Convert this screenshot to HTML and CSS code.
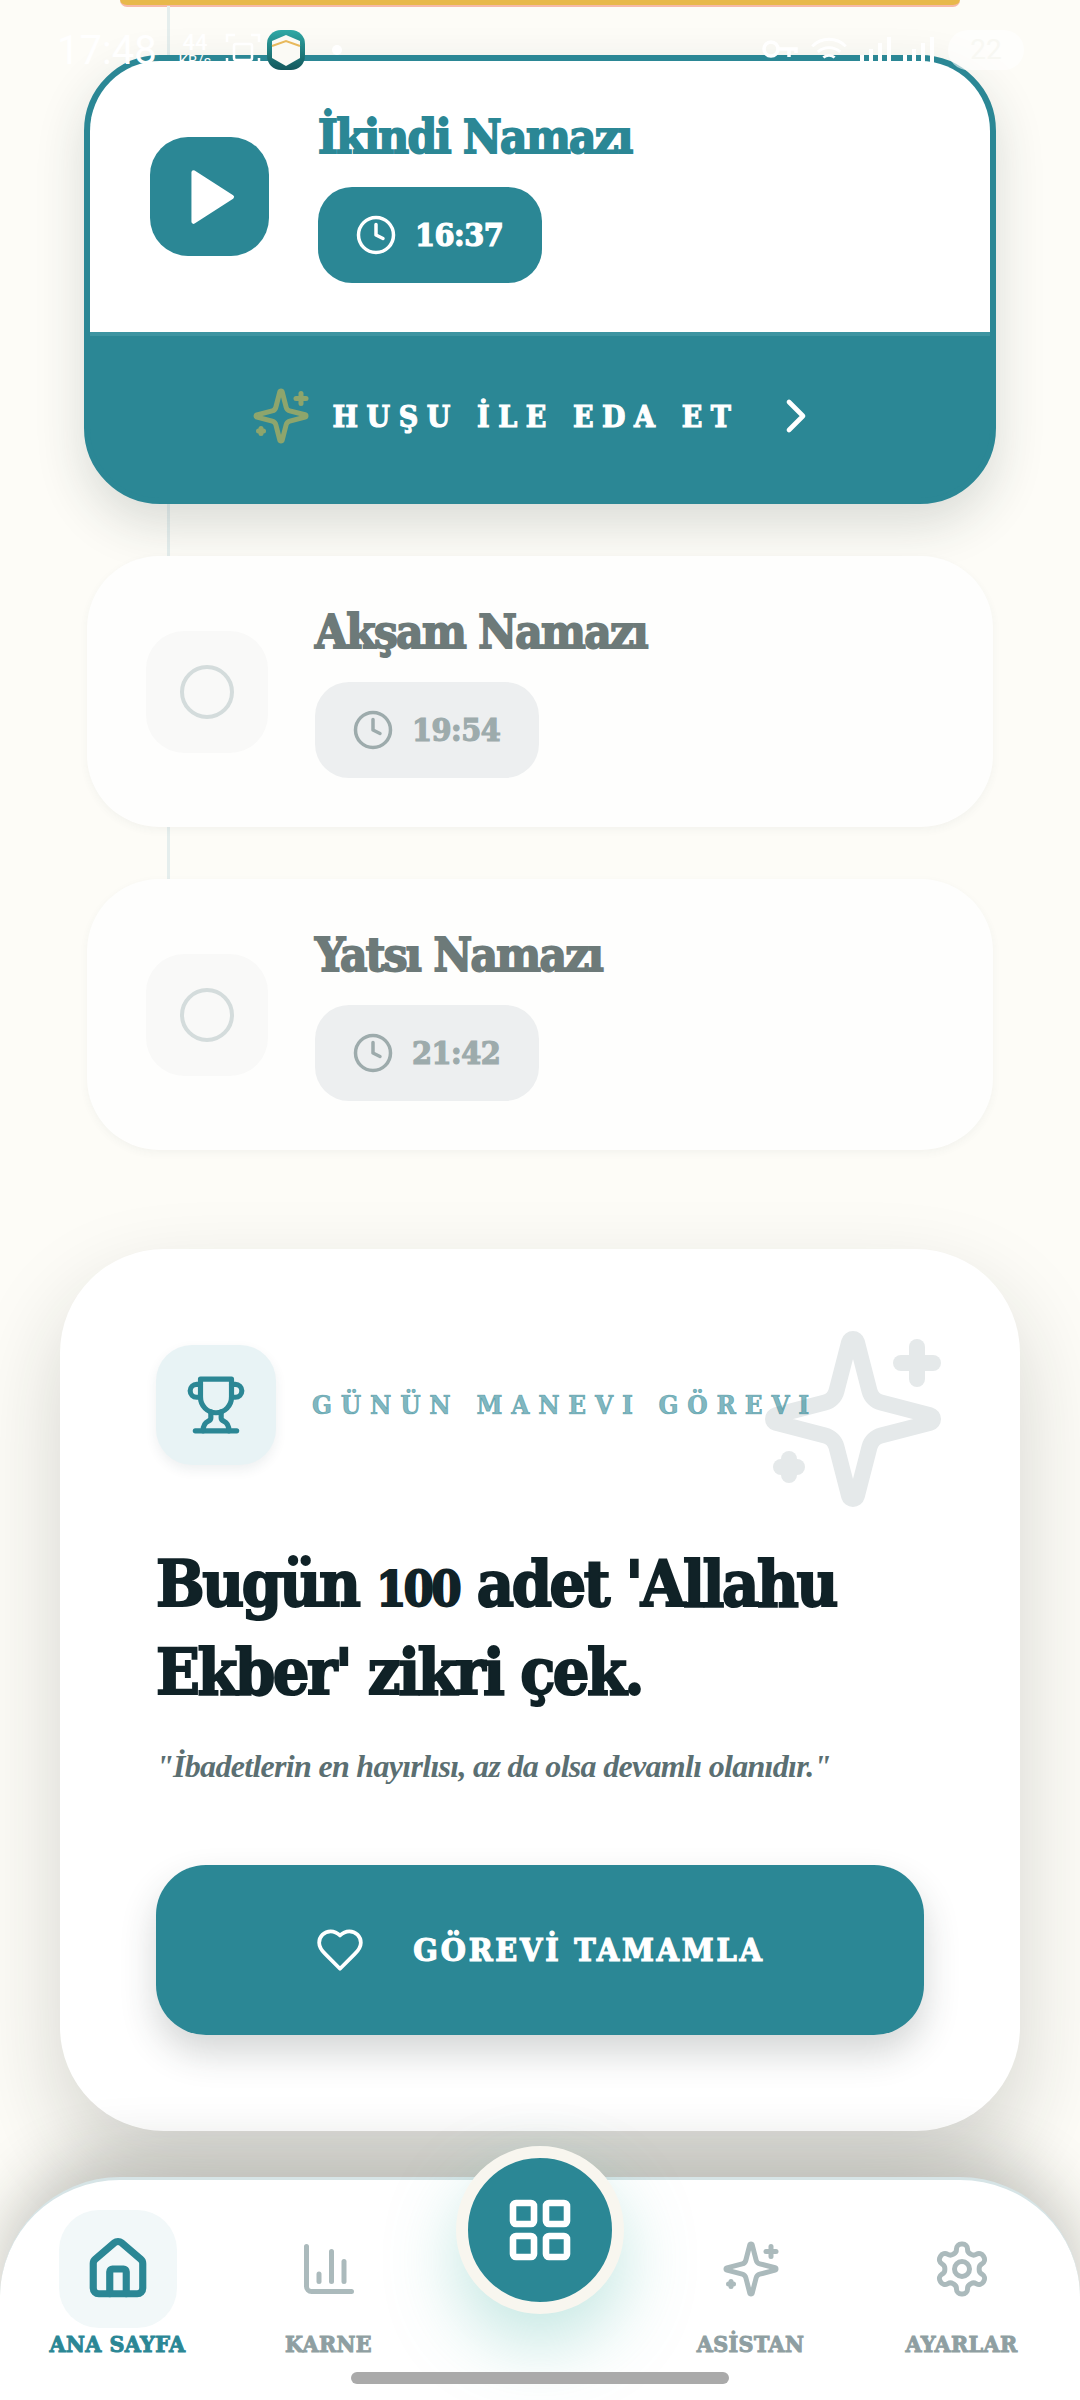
FILE: index.html
```html
<!DOCTYPE html>
<html lang="tr">
<head>
    <meta charset="UTF-8">
    <meta name="viewport" content="width=device-width, initial-scale=1.0">
    <title>Ana Sayfa</title>
    <link rel="stylesheet" href="styles.css">
</head>
<body>
    <div class="page">
        <div class="top-strip"></div>
        <div class="timeline-line"></div>

        <!-- Prayer list -->
        <section class="prayers">
            <article class="prayer-active">
                <div class="prayer-body">
                    <div class="play-box">
                        <svg class="play-icon" viewBox="0 0 24 24"><polygon points="6 3 20 12 6 21"/></svg>
                    </div>
                    <div class="prayer-info">
                        <h2 class="prayer-name">İkindi Namazı</h2>
                        <div class="time-pill">
                            <svg class="icon clock-icon" viewBox="0 0 24 24"><circle cx="12" cy="12" r="10"/><polyline points="12 6 12 12 16 14"/></svg>
                            <span>16:37</span>
                        </div>
                    </div>
                </div>
                <div class="prayer-action">
                    <svg class="icon action-spark" viewBox="0 0 24 24"><path d="M9.937 15.5A2 2 0 0 0 8.5 14.063l-6.135-1.582a.5.5 0 0 1 0-.962L8.5 9.936A2 2 0 0 0 9.937 8.5l1.582-6.135a.5.5 0 0 1 .963 0L14.063 8.5A2 2 0 0 0 15.5 9.937l6.135 1.581a.5.5 0 0 1 0 .964L15.5 14.063a2 2 0 0 0-1.437 1.437l-1.582 6.135a.5.5 0 0 1-.963 0z"/><path d="M20 3v4"/><path d="M22 5h-4"/><path d="M4 17v2"/><path d="M5 18H3"/></svg>
                    <span class="action-label">HUŞU İLE EDA ET</span>
                    <svg class="icon action-chevron" viewBox="0 0 24 24"><path d="m9 18 6-6-6-6"/></svg>
                </div>
            </article>

            <article class="prayer-card">
                <div class="check-box"><span class="check-ring"></span></div>
                <div class="prayer-info">
                    <h2 class="prayer-name">Akşam Namazı</h2>
                    <div class="time-pill">
                        <svg class="icon clock-icon" viewBox="0 0 24 24"><circle cx="12" cy="12" r="10"/><polyline points="12 6 12 12 16 14"/></svg>
                        <span>19:54</span>
                    </div>
                </div>
            </article>

            <article class="prayer-card">
                <div class="check-box"><span class="check-ring"></span></div>
                <div class="prayer-info">
                    <h2 class="prayer-name">Yatsı Namazı</h2>
                    <div class="time-pill">
                        <svg class="icon clock-icon" viewBox="0 0 24 24"><circle cx="12" cy="12" r="10"/><polyline points="12 6 12 12 16 14"/></svg>
                        <span>21:42</span>
                    </div>
                </div>
            </article>
        </section>

        <!-- Daily task -->
        <section class="mission">
            <svg class="icon ghost-spark" viewBox="0 0 24 24"><path d="M9.937 15.5A2 2 0 0 0 8.5 14.063l-6.135-1.582a.5.5 0 0 1 0-.962L8.5 9.936A2 2 0 0 0 9.937 8.5l1.582-6.135a.5.5 0 0 1 .963 0L14.063 8.5A2 2 0 0 0 15.5 9.937l6.135 1.581a.5.5 0 0 1 0 .964L15.5 14.063a2 2 0 0 0-1.437 1.437l-1.582 6.135a.5.5 0 0 1-.963 0z"/><path d="M20 3v4"/><path d="M22 5h-4"/><path d="M4 17v2"/><path d="M5 18H3"/></svg>
            <div class="mission-head">
                <div class="trophy-box">
                    <svg class="icon trophy-icon" viewBox="0 0 24 24"><path d="M6 9H4.5a2.5 2.5 0 0 1 0-5H6"/><path d="M18 9h1.5a2.5 2.5 0 0 0 0-5H18"/><path d="M4 22h16"/><path d="M10 14.66V17c0 .55-.47.98-.97 1.21C7.85 18.75 7 20.24 7 22"/><path d="M14 14.66V17c0 .55.47.98.97 1.21C16.15 18.75 17 20.24 17 22"/><path d="M18 2H6v7a6 6 0 0 0 12 0V2Z"/></svg>
                </div>
                <span class="mission-label">GÜNÜN MANEVI GÖREVI</span>
            </div>
            <h1 class="mission-title">
                <span class="title-line">Bugün <span class="old-num">100</span> adet 'Allahu</span>
                <span class="title-line">Ekber' zikri çek.</span>
            </h1>
            <p class="mission-quote">"İbadetlerin en hayırlısı, az da olsa devamlı olanıdır."</p>
            <button class="mission-btn">
                <svg class="icon heart-icon" viewBox="0 0 24 24"><path d="M19 14c1.49-1.46 3-3.21 3-5.5A5.5 5.5 0 0 0 16.5 3c-1.76 0-3 .5-4.5 2-1.5-1.5-2.74-2-4.5-2A5.5 5.5 0 0 0 2 8.5c0 2.3 1.5 4.05 3 5.5l7 7Z"/></svg>
                <span>GÖREVİ TAMAMLA</span>
            </button>
        </section>

        <!-- Bottom navigation -->
        <nav class="bottom-nav">
            <a class="nav-item nav-item-active">
                <span class="nav-icon-box">
                    <svg class="icon nav-icon" viewBox="0 0 24 24"><path d="M15 21v-8a1 1 0 0 0-1-1h-4a1 1 0 0 0-1 1v8"/><path d="M3 10a2 2 0 0 1 .709-1.528l7-5.999a2 2 0 0 1 2.582 0l7 5.999A2 2 0 0 1 21 10v9a2 2 0 0 1-2 2H5a2 2 0 0 1-2-2z"/></svg>
                </span>
                <span class="nav-label">ANA SAYFA</span>
            </a>
            <a class="nav-item">
                <span class="nav-icon-box">
                    <svg class="icon nav-icon" viewBox="0 0 24 24"><path d="M3 3v16a2 2 0 0 0 2 2h16"/><path d="M18 17V9"/><path d="M13 17V5"/><path d="M8 17v-3"/></svg>
                </span>
                <span class="nav-label">KARNE</span>
            </a>
            <span class="nav-gap"></span>
            <a class="nav-item">
                <span class="nav-icon-box">
                    <svg class="icon nav-icon" viewBox="0 0 24 24"><path d="M9.937 15.5A2 2 0 0 0 8.5 14.063l-6.135-1.582a.5.5 0 0 1 0-.962L8.5 9.936A2 2 0 0 0 9.937 8.5l1.582-6.135a.5.5 0 0 1 .963 0L14.063 8.5A2 2 0 0 0 15.5 9.937l6.135 1.581a.5.5 0 0 1 0 .964L15.5 14.063a2 2 0 0 0-1.437 1.437l-1.582 6.135a.5.5 0 0 1-.963 0z"/><path d="M20 3v4"/><path d="M22 5h-4"/><path d="M4 17v2"/><path d="M5 18H3"/></svg>
                </span>
                <span class="nav-label">ASİSTAN</span>
            </a>
            <a class="nav-item">
                <span class="nav-icon-box">
                    <svg class="icon nav-icon" viewBox="0 0 24 24"><path d="M12.22 2h-.44a2 2 0 0 0-2 2v.18a2 2 0 0 1-1 1.73l-.43.25a2 2 0 0 1-2 0l-.15-.08a2 2 0 0 0-2.73.73l-.22.38a2 2 0 0 0 .73 2.73l.15.1a2 2 0 0 1 1 1.72v.51a2 2 0 0 1-1 1.74l-.15.09a2 2 0 0 0-.73 2.73l.22.38a2 2 0 0 0 2.73.73l.15-.08a2 2 0 0 1 2 0l.43.25a2 2 0 0 1 1 1.73V20a2 2 0 0 0 2 2h.44a2 2 0 0 0 2-2v-.18a2 2 0 0 1 1-1.73l.43-.25a2 2 0 0 1 2 0l.15.08a2 2 0 0 0 2.73-.73l.22-.39a2 2 0 0 0-.73-2.73l-.15-.08a2 2 0 0 1-1-1.74v-.5a2 2 0 0 1 1-1.74l.15-.09a2 2 0 0 0 .73-2.73l-.22-.38a2 2 0 0 0-2.73-.73l-.15.08a2 2 0 0 1-2 0l-.43-.25a2 2 0 0 1-1-1.73V4a2 2 0 0 0-2-2z"/><circle cx="12" cy="12" r="3"/></svg>
                </span>
                <span class="nav-label">AYARLAR</span>
            </a>
            <button class="nav-fab">
                <svg class="icon fab-icon" viewBox="0 0 24 24"><rect width="7" height="7" x="3" y="3" rx="1"/><rect width="7" height="7" x="14" y="3" rx="1"/><rect width="7" height="7" x="14" y="14" rx="1"/><rect width="7" height="7" x="3" y="14" rx="1"/></svg>
            </button>
            <div class="home-bar"></div>
        </nav>

        <!-- System status bar, drawn on top of the page -->
        <div class="status-bar">
            <div class="status-left">
                <span class="status-time">17:48</span>
                <span class="status-speed"><b>44</b><small>KB/s</small></span>
                <svg class="status-shot" viewBox="0 0 36 36"><path d="M2 10V3h8M26 3h8v7M2 26v7h8M26 33h8v-7"/><rect x="9" y="12" width="18" height="16" rx="2"/></svg>
                <svg class="status-app" viewBox="0 0 38 40">
                    <defs><linearGradient id="appFill" x1="0" y1="0" x2="0" y2="1"><stop offset="0" stop-color="#2fa9a6"/><stop offset="1" stop-color="#14575c"/></linearGradient></defs>
                    <rect width="38" height="40" rx="14" fill="url(#appFill)"/>
                    <polygon points="19,5 33,11 33,28 19,36 5,28 5,11" fill="#fbfaf5"/>
                    <path d="M5 16 19 11l14 5" fill="none" stroke="#e8b95c" stroke-width="2"/>
                </svg>
                <span class="status-dot"></span>
            </div>
            <div class="status-right">
                <svg class="status-key" viewBox="0 0 36 22"><circle cx="9" cy="10" r="7"/><path d="M16 10h18v4M27 10v8"/></svg>
                <svg class="status-wifi" viewBox="0 0 40 30"><path d="M2 11c10-10 26-10 36 0M8 17c7-6 17-6 24 0M14 23c3-3 9-3 12 0"/></svg>
                <div class="status-bars"><i></i><i></i><i></i><i></i></div>
                <div class="status-bars"><i></i><i></i><i></i><i></i></div>
                <span class="status-battery">22</span>
            </div>
        </div>
    </div>
</body>
</html>
```

FILE: styles.css
```css
* {
    box-sizing: border-box;
}
body {
    margin: 0;
    font-family: "DejaVu Serif Condensed", "DejaVu Serif", serif;
}
h1, h2, p {
    margin: 0;
}
.page {
    position: relative;
    width: 1080px;
    height: 2400px;
    overflow: hidden;
    background: #fdfcf7;
}
.icon {
    fill: none;
    stroke: currentColor;
    stroke-width: 2;
    stroke-linecap: round;
    stroke-linejoin: round;
}

/* Top leftovers */
.top-strip {
    height: 7px;
    margin: 0 120px;
    background: #e8b84b;
    border-bottom: 2px solid #f6b9a9;
    border-radius: 0 0 40px 40px;
}
.timeline-line {
    position: absolute;
    left: 167px;
    top: 6px;
    width: 3px;
    height: 880px;
    background: #e5eeed;
}

/* Prayer list */
.prayers {
    position: relative;
    display: flex;
    flex-direction: column;
    gap: 52px;
    padding: 48px 84px 0;
}
.prayer-active {
    height: 449px;
    border: 6px solid #2b8795;
    border-radius: 76px;
    background: #2b8795;
    overflow: hidden;
    box-shadow: 0 20px 50px rgba(30, 50, 50, 0.16);
}
.prayer-body {
    height: 271px;
    display: flex;
    align-items: center;
    gap: 49px;
    padding-left: 60px;
    background: #fff;
}
.play-box {
    width: 119px;
    height: 119px;
    border-radius: 38px;
    background: #2b8795;
    display: flex;
    align-items: center;
    justify-content: center;
}
.play-icon {
    width: 66px;
    height: 66px;
    fill: #fff;
    stroke: #fff;
    stroke-width: 1.5;
    stroke-linejoin: round;
}
.prayer-info {
    display: flex;
    flex-direction: column;
    gap: 19px;
    margin-top: -5px;
}
.prayer-name {
    font-size: 47px;
    line-height: 62px;
    font-weight: 700;
    letter-spacing: -1.6px;
    -webkit-text-stroke: 1.8px currentColor;
    color: #2b8795;
    white-space: nowrap;
}
.time-pill {
    display: flex;
    align-items: center;
    gap: 18px;
    width: 224px;
    height: 96px;
    padding-left: 37px;
    border-radius: 34px;
    background: #2b8795;
    color: #fff;
    font-size: 32px;
    font-weight: 700;
    letter-spacing: -0.5px;
}
.time-pill span {
    -webkit-text-stroke: 1.2px currentColor;
}
.clock-icon {
    width: 42px;
    height: 42px;
}
.prayer-action {
    height: 172px;
    display: flex;
    align-items: center;
    justify-content: center;
    padding-bottom: 8px;
    border-top: 4px solid #3d94a1;
    color: #fff;
}
.action-spark {
    width: 60px;
    height: 60px;
    color: #8ea56c;
    margin-left: -6px;
}
.action-label {
    margin-left: 22px;
    font-size: 30px;
    font-weight: 700;
    letter-spacing: 8.6px;
    -webkit-text-stroke: 1.1px currentColor;
    white-space: nowrap;
}
.action-chevron {
    width: 56px;
    height: 56px;
    margin-left: 28px;
}
.prayer-card {
    height: 271px;
    margin: 0 3px;
    display: flex;
    align-items: center;
    gap: 47px;
    padding-left: 59px;
    border-radius: 72px;
    background: #fefefd;
    box-shadow: 0 3px 8px rgba(60, 80, 80, 0.05);
}
.prayer-card .prayer-name {
    color: #6d7a79;
}
.prayer-card .time-pill {
    background: #edeff0;
    color: #9dabac;
}
.check-box {
    width: 122px;
    height: 122px;
    border-radius: 38px;
    background: #f9f9f8;
    display: flex;
    align-items: center;
    justify-content: center;
}
.check-ring {
    width: 54px;
    height: 54px;
    border: 4px solid #d4dcdc;
    border-radius: 50%;
}

/* Daily task */
.mission {
    position: relative;
    height: 882px;
    margin: 99px 60px 0;
    padding: 96px 96px 0;
    border-radius: 104px;
    background: #fff;
    box-shadow: 0 40px 90px rgba(30, 35, 30, 0.18);
}
.ghost-spark {
    position: absolute;
    left: 697px;
    top: 74px;
    width: 192px;
    height: 192px;
    color: #e5e9ea;
    stroke-width: 2;
}
.mission-head {
    position: relative;
    display: flex;
    align-items: center;
    gap: 36px;
}
.trophy-box {
    width: 120px;
    height: 120px;
    border-radius: 36px;
    background: #e8f3f5;
    box-shadow: 0 5px 12px rgba(40, 70, 80, 0.08);
    display: flex;
    align-items: center;
    justify-content: center;
}
.trophy-icon {
    width: 62px;
    height: 62px;
    color: #2b8795;
}
.mission-label {
    font-size: 26px;
    font-weight: 700;
    letter-spacing: 8.8px;
    -webkit-text-stroke: 0.7px currentColor;
    color: rgba(43, 135, 149, 0.6);
    white-space: nowrap;
}
.mission-title {
    margin-top: 75px;
    font-size: 64px;
    line-height: 88px;
    font-weight: 700;
    letter-spacing: -2.4px;
    -webkit-text-stroke: 2px currentColor;
    color: #102227;
}
.title-line {
    display: block;
    white-space: nowrap;
}
.old-num {
    font-size: 48px;
    line-height: 1;
}
.mission-quote {
    margin-top: 30px;
    font-family: "Liberation Serif", serif;
    font-size: 32px;
    line-height: 40px;
    font-style: italic;
    font-weight: 700;
    letter-spacing: -0.7px;
    color: #5b6f72;
    white-space: nowrap;
}
.mission-btn {
    width: 768px;
    height: 170px;
    margin-top: 79px;
    display: flex;
    align-items: center;
    justify-content: center;
    gap: 48px;
    border: none;
    border-radius: 50px;
    background: #2b8795;
    box-shadow: 0 18px 36px rgba(40, 50, 50, 0.2);
    color: #fff;
    font-family: inherit;
    font-size: 32px;
    font-weight: 700;
    letter-spacing: 2.8px;
}
.mission-btn span {
    -webkit-text-stroke: 1.2px currentColor;
}
.heart-icon {
    width: 50px;
    height: 50px;
    stroke-width: 1.8;
}

/* Bottom navigation */
.bottom-nav {
    position: absolute;
    left: 0;
    right: 0;
    bottom: 0;
    height: 223px;
    padding: 30px 12px 0;
    display: grid;
    grid-template-columns: repeat(5, 211px);
    align-items: start;
    border-top: 3px solid #d6e4e6;
    border-radius: 120px 120px 0 0;
    background: #fff;
    box-shadow: 0 -20px 60px rgba(30, 35, 25, 0.24);
}
.nav-item {
    display: flex;
    flex-direction: column;
    align-items: center;
    color: #abbabc;
}
.nav-icon-box {
    width: 118px;
    height: 118px;
    border-radius: 40px;
    display: flex;
    align-items: center;
    justify-content: center;
}
.nav-icon {
    width: 60px;
    height: 60px;
    stroke-width: 2;
}
.nav-label {
    margin-top: 1px;
    font-size: 23px;
    line-height: 30px;
    font-weight: 700;
    letter-spacing: 0.4px;
    -webkit-text-stroke: 1px currentColor;
    color: #8f9fa2;
    white-space: nowrap;
}
.nav-item-active {
    color: #2b8795;
}
.nav-item-active .nav-icon-box {
    background: #f2f8f9;
}
.nav-item-active .nav-icon {
    width: 66px;
    height: 66px;
    stroke-width: 2.6;
}
.nav-item-active .nav-label {
    color: #2b8795;
}
.nav-fab {
    position: absolute;
    left: 456px;
    top: -34px;
    width: 168px;
    height: 168px;
    display: flex;
    align-items: center;
    justify-content: center;
    border: 12px solid #f8f6ef;
    border-radius: 50%;
    background: #2b8795;
    color: #fff;
    box-shadow: 0 30px 70px rgba(80, 185, 170, 0.34);
}
.fab-icon {
    width: 72px;
    height: 72px;
    stroke-width: 2.2;
}
.home-bar {
    position: absolute;
    left: 351px;
    bottom: 16px;
    width: 378px;
    height: 12px;
    border-radius: 6px;
    background: #aaa;
}

/* Status bar */
.status-bar {
    position: absolute;
    left: 0;
    right: 0;
    top: 28px;
    height: 44px;
    padding: 0 56px 0 57px;
    display: flex;
    align-items: center;
    justify-content: space-between;
    color: #fff;
    font-family: Roboto, sans-serif;
}
.status-left,
.status-right {
    display: flex;
    align-items: center;
}
.status-time {
    font-size: 40px;
}
.status-speed {
    display: flex;
    flex-direction: column;
    align-items: center;
    margin-left: 22px;
    line-height: 1;
}
.status-speed b {
    font-size: 22px;
    font-weight: 500;
}
.status-speed small {
    font-size: 15px;
}
.status-shot {
    width: 36px;
    height: 36px;
    margin-left: 14px;
    fill: none;
    stroke: #fff;
    stroke-width: 2.5;
}
.status-app {
    width: 38px;
    height: 40px;
    margin-left: 6px;
}
.status-dot {
    width: 10px;
    height: 10px;
    margin-left: 27px;
    border-radius: 50%;
    background: #fff;
}
.status-key {
    width: 36px;
    height: 22px;
    fill: none;
    stroke: #fff;
    stroke-width: 3.5;
}
.status-wifi {
    width: 38px;
    height: 28px;
    margin-left: 12px;
    fill: none;
    stroke: #fff;
    stroke-width: 3;
}
.status-bars {
    display: flex;
    align-items: flex-end;
    gap: 5px;
    height: 30px;
    margin-left: 12px;
}
.status-bars i {
    width: 4px;
    height: 10px;
    background: #fff;
}
.status-bars i:nth-child(2) {
    height: 16px;
}
.status-bars i:nth-child(3) {
    height: 22px;
}
.status-bars i:nth-child(4) {
    height: 28px;
}
.status-battery {
    width: 76px;
    height: 40px;
    margin-left: 14px;
    border-radius: 20px;
    background: rgba(255, 255, 255, 0.6);
    color: #f8f8f3;
    font-size: 28px;
    line-height: 40px;
    text-align: center;
}
```
